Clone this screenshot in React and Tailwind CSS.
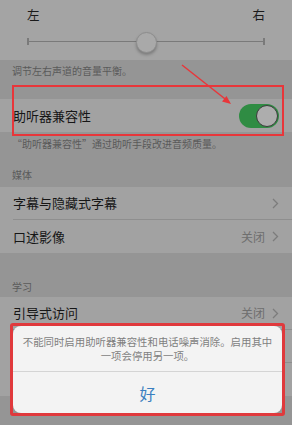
import React from 'react';

const font = { fontFamily: '"Noto Sans CJK SC", "Noto Sans", sans-serif' };

function Chevron() {
  return (
    <svg width="7" height="11" viewBox="0 0 7 11" className="ml-[7px]">
      <path d="M1 1l4.5 4.5L1 10" fill="none" stroke="#7c7c7c" strokeWidth="1.3" />
    </svg>
  );
}

function Row({ label, value, chevron = true, border = false, children }) {
  return (
    <div className="bg-[#a2a2a2] pl-[13px]">
      <div className={`h-[33px] flex items-center pr-[13px] ${border ? 'border-b border-[#8e8e8e]' : ''}`}>
        <span className="text-[13px] text-[#161616] flex-1">{label}</span>
        {value && <span className="text-[12px] text-[#6e6e6e]">{value}</span>}
        {chevron && <Chevron />}
        {children}
      </div>
    </div>
  );
}

export default function App() {
  return (
    <div className="relative w-[292px] h-[425px] overflow-hidden bg-[#959595]" style={font}>
      {/* balance slider */}
      <div className="h-[60px] bg-[#a4a4a4] px-[27px] pt-[6px]">
        <div className="flex justify-between text-[12.5px] text-[#1a1a1a]">
          <span>左</span>
          <span>右</span>
        </div>
        <div className="relative mt-[7px] h-[20px] flex items-center">
          <div className="w-[2px] h-[7px] bg-[#7a7a7a]" />
          <div className="flex-1 h-[1px] bg-[#7a7a7a]" />
          <div className="w-[2px] h-[7px] bg-[#7a7a7a]" />
          <div className="absolute left-[109px] top-0 w-[21px] h-[21px] rounded-full bg-[#a9a9a9] border border-[#8d8d8d] shadow-[0_2px_3px_rgba(0,0,0,0.25)]" />
        </div>
      </div>

      <div className="h-[39px] pl-[12px] pt-[4px] text-[10px] leading-[14px] text-[#5a5a5a]">调节左右声道的音量平衡。</div>

      <Row label="助听器兼容性" chevron={false}>
        <div className="w-[40px] h-[24px] rounded-full bg-[#2f8c43] relative">
          <div className="absolute right-[1px] top-[1px] w-[22px] h-[22px] rounded-full bg-[#adadad] border border-[#3b3b3b]" />
        </div>
      </Row>

      <div className="h-[55px] pl-[12px] pt-[5px] flex flex-col text-[10px] leading-[14px] text-[#5a5a5a]">
        <span>“助听器兼容性”通过助听手段改进音频质量。</span>
        <span className="mt-[17px]">媒体</span>
      </div>

      <Row label="字幕与隐藏式字幕" border />
      <Row label="口述影像" value="关闭" />

      <div className="h-[44px] pl-[12px] flex items-end pb-[3px] text-[10px] leading-[14px] text-[#5a5a5a]">学习</div>

      <Row label="引导式访问" value="关闭" border />
      <Row label="" chevron={false} border />
      <Row label="" chevron={false} />

      {/* annotation arrow */}
      <svg className="absolute left-0 top-0" width="292" height="425">
        <line x1="182" y1="65" x2="229" y2="102" stroke="#e8363a" strokeWidth="1.5" />
        <path d="M231 104l-9-2.5 4.5-5.5z" fill="#e8363a" />
      </svg>

      {/* annotation box around toggle row */}
      <div className="absolute left-[12px] top-[85px] w-[272px] h-[51px] border-2 border-[#e8363a]" />

      {/* alert */}
      <div className="absolute left-[10px] top-[323px] w-[275px] h-[93px] border-[3px] border-[#e0393c] rounded-[3px]">
        <div className="h-full rounded-[8px] bg-[#f3f3f3] flex flex-col">
          <div className="h-[46px] flex flex-col items-center justify-center text-[10.4px] leading-[14px] text-[#7f7f7f] border-b border-[#d4d4d4]">
            <span>不能同时启用助听器兼容性和电话噪声消除。启用其中</span>
            <span>一项会停用另一项。</span>
          </div>
          <div className="flex-1 flex items-center justify-center text-[16px] text-[#3a7fc0]">好</div>
        </div>
      </div>
    </div>
  );
}
